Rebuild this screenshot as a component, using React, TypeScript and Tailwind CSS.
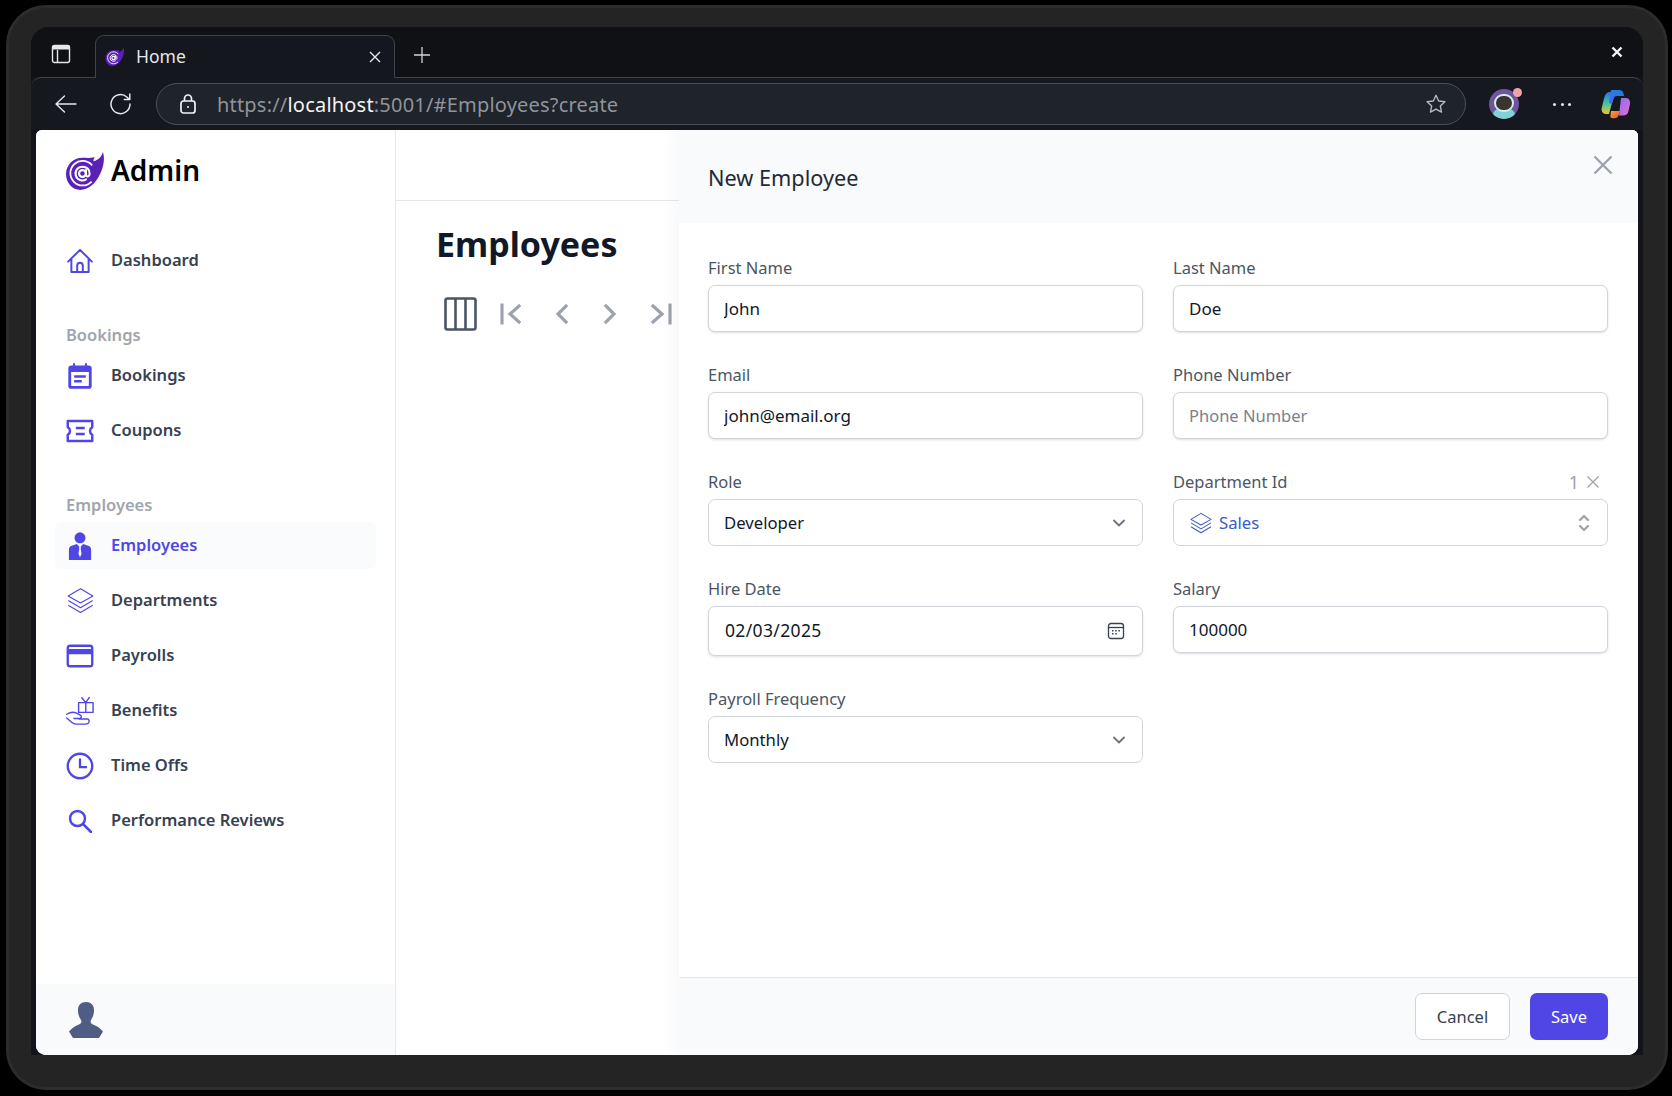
import React from "react";

const I = "#4f46e5";

function Svg({ children, size = 28, className = "", view = "0 0 24 24" }: { children: React.ReactNode; size?: number; className?: string; view?: string }) {
  return (
    <svg width={size} height={size} viewBox={view} fill="none" stroke="currentColor" strokeLinecap="round" strokeLinejoin="round" className={className}>
      {children}
    </svg>
  );
}

const HomeIcon = () => (
  <Svg>
    <path strokeWidth="1.700" d="M1.800 12.500 12 2.500l10.200 10M4.600 10.200V21.500h14.800V10.200M9.600 21.500v-5.700a2.400 2.400 0 0 1 4.800 0v5.700" />
  </Svg>
);
const CalendarIcon = () => (
  <Svg>
    <path fill={I} stroke="none" d="M6 1h1.800v2h8.400V1H18v2h1.500A2.500 2.500 0 0 1 22 5.500v15a2.500 2.500 0 0 1-2.500 2.500h-15A2.500 2.500 0 0 1 2 20.500v-15A2.500 2.500 0 0 1 4.500 3H6zM4.400 8.500V20a.6.600 0 0 0 .6.600h14a.6.600 0 0 0 .6-.6V8.500z" />
    <path strokeWidth="2.200" stroke={I} strokeLinecap="butt" d="M7 12.500h10M7 16.500h6.500" />
  </Svg>
);
const TicketIcon = () => (
  <Svg>
    <path strokeWidth="2.100" d="M1.500 3.500h21v5.200c-2.600 1.600-2.600 5 0 6.600v5.200h-21v-5.200c2.600-1.600 2.600-5 0-6.600z" />
    <path strokeWidth="2.100" strokeLinecap="square" d="M9.500 9.500h5.500M9.500 14.500h5.500" />
  </Svg>
);
const PersonIcon = () => (
  <Svg>
    <circle cx="12" cy="5" r="4.700" fill={I} stroke="none" />
    <path fill={I} stroke="none" d="M2.500 24v-9c0-1.800 1-2.800 2.500-3.300l4.300-1.500 2.700 3 2.700-3 4.300 1.500c1.500.5 2.500 1.500 2.500 3.300v9z" />
    <path fill="#fafbfc" stroke="none" d="M11.200 12.800h1.600l-.2 1.500.7 4.500-1.300 2.900-1.300-2.900.7-4.500z" />
  </Svg>
);
const LayersIcon = ({ size = 27, w = 1 }: { size?: number; w?: number }) => (
  <Svg size={size}>
    <path strokeWidth={w} d="M12 1.500 23 8l-11 6.200L1 8zM1.500 12.200 12 18.400l10.500-6.200M1.500 16.400 12 22.600l10.500-6.200" />
  </Svg>
);
const CardIcon = () => (
  <Svg>
    <rect x="1.500" y="3.200" width="21" height="17.600" rx="2" strokeWidth="2" />
    <path fill={I} stroke="none" d="M1.500 6h21v4.500h-21z" />
  </Svg>
);
const GiftIcon = () => (
  <Svg size={30} view="0 0 30 30">
    <path strokeWidth="1.500" d="M13.500 6h15.500v10.500H13.500zM21.200 6v10.500M17 .8l4.200 5.200 3.800-5.500" />
    <path strokeWidth="1.500" d="M.8 18.500c3-1.800 7-2.600 10-1.500l4.500 2.500c2 1 1 3.500-1 3.500H8.500M.8 22.500c2.500 2 4.800 5 7.500 6 2 .8 13 .8 15 0 2-.8 2-5-.5-5H14" />
  </Svg>
);
const ClockIcon = () => (
  <Svg>
    <circle cx="12" cy="12" r="10.500" strokeWidth="2" />
    <path strokeWidth="2" strokeLinecap="square" d="M12 6.500V13h5" />
  </Svg>
);
const SearchIcon = () => (
  <Svg size={24}>
    <circle cx="9.500" cy="9.500" r="7.500" strokeWidth="2.500" />
    <path strokeWidth="2.500" d="m15 15 8 8" />
  </Svg>
);

function Logo({ size = 41 }: { size?: number }) {
  return (
    <svg width={size} height={size} viewBox="0 0 40 38" className="shrink-0">
      <path fill="#5b21b6" d="M17 5.500c3 0 6 .500 8 0l4-.500c-1 1.500-1.500 3-1 4 4-1 7.500-4 9-9 2 6 1 14-3 22-4 9-12 15-19 15C7 37 1 30 1 21.500 1 12.500 8 5.500 17 5.500z" />
      <path fill="none" stroke="#fff" strokeWidth="1.700" d="M26 28.800A12 12 0 1 1 26.500 13" />
      <circle cx="17" cy="21" r="3.300" fill="none" stroke="#fff" strokeWidth="2.200" />
      <path fill="none" stroke="#fff" strokeWidth="2" strokeLinecap="round" d="M20.500 17.500V22c0 2.500 3.300 2.500 3.500-.8.3-4.200-3-6.900-7-6.900a6.700 6.700 0 1 0 3.500 12.400" />
    </svg>
  );
}

function NavItem({ icon, label, active }: { icon: React.ReactNode; label: string; active?: boolean }) {
  return (
    <div className={`mx-[19px] flex h-[47px] items-center rounded-md pl-[11px] ${active ? "bg-[#fafbfc]" : ""}`}>
      <span className="flex w-[28px] shrink-0 items-center justify-center text-[#4f46e5]">{icon}</span>
      <span className={`ml-[17px] text-[16.500px] font-semibold ${active ? "text-[#4f46e5]" : "text-[#374151]"}`}>{label}</span>
    </div>
  );
}

function Field({ label, children, extra }: { label: string; children: React.ReactNode; extra?: React.ReactNode }) {
  return (
    <div>
      <div className="mb-[5px] flex h-[24px] items-center justify-between text-[16.500px] text-[#4b5563]">
        <span>{label}</span>
        {extra}
      </div>
      {children}
    </div>
  );
}

function TextInput({ value, placeholder }: { value?: string; placeholder?: string }) {
  return (
    <input
      readOnly
      value={value ?? ""}
      placeholder={placeholder}
      className="block h-[47px] w-full rounded-[7px] border border-[#d1d5db] bg-white px-[15px] text-[17px] text-[#111827] shadow-sm outline-none placeholder:text-[16.500px] placeholder:text-[#7b8089]"
    />
  );
}

function SelectBox({ value }: { value: string }) {
  return (
    <div className="flex h-[47px] items-center justify-between rounded-[7px] border border-[#d1d5db] bg-white pl-[15px] pr-[13px] text-[16.700px] text-[#111827]">
      <span>{value}</span>
      <svg width="20" height="20" viewBox="0 0 20 20" fill="none" stroke="#6b7280" strokeWidth="1.800" strokeLinecap="round" strokeLinejoin="round">
        <path d="m5 7.500 5 5 5-5" />
      </svg>
    </div>
  );
}

function Copilot() {
  return (
    <svg width="30" height="30" viewBox="0 0 30 30">
      <defs>
        <linearGradient id="cpA" x1="0" y1="0" x2="0" y2="1">
          <stop offset="0" stopColor="#2f6fe0" />
          <stop offset="0.500" stopColor="#3cc3a0" />
          <stop offset="1" stopColor="#f2c230" />
        </linearGradient>
        <linearGradient id="cpB" x1="0" y1="0" x2="0" y2="1">
          <stop offset="0" stopColor="#1d7fe0" />
          <stop offset="1" stopColor="#5a5fe8" />
        </linearGradient>
        <linearGradient id="cpC" x1="0" y1="0" x2="1" y2="1">
          <stop offset="0" stopColor="#8d6cf0" />
          <stop offset="1" stopColor="#e76fd0" />
        </linearGradient>
        <linearGradient id="cpD" x1="0" y1="0" x2="1" y2="1">
          <stop offset="0" stopColor="#f5a23a" />
          <stop offset="1" stopColor="#e9503f" />
        </linearGradient>
      </defs>
      <path fill="url(#cpC)" d="M20 9h5c3 0 4.500 3 4 6l-1.500 7c-.500 3-3 4.500-5.500 4.500h-4z" />
      <path fill="url(#cpD)" d="M10 22h9l-1.500 4.500c-.500 1.800-2 2.800-3.500 2.800h-2.500c-2 0-2.500-1.500-2-3z" />
      <path fill="url(#cpA)" d="M9 3h5L8 25H5C1.500 25 0 22 .800 18.500l2.200-9C4 5 6 3 9 3z" />
      <path fill="url(#cpB)" d="M10 1h8c2.500 0 4 1.500 4.500 3.500L23 7h-7c-2 0-3 1-3.500 3L11 15l-3-1 1-7z" />
    </svg>
  );
}

function Avatar() {
  return (
    <div className="relative flex h-[30px] w-[30px] items-center justify-center overflow-visible">
      <div className="relative h-[30px] w-[30px] overflow-hidden rounded-full bg-[#6f559b]">
        <div className="absolute bottom-0 left-[4px] h-[10px] w-[22px] rounded-t-md bg-[#7fd3d8]" />
        <div className="absolute left-[5px] top-[5px] h-[18px] w-[20px] rounded-full border-[2.500px] border-[#d2edf2] bg-[#3b332d]" />
      </div>
      <div className="absolute right-[-3px] top-[-1px] h-[9px] w-[9px] rounded-full bg-[#f0a3a8]" />
    </div>
  );
}

function Chevron({ d, className = "" }: { d: string; className?: string }) {
  return (
    <svg width="26" height="26" viewBox="0 0 26 26" fill="none" stroke="#9ca3af" strokeWidth="3.200" strokeLinecap="square" strokeLinejoin="miter" className={className}>
      <path d={d} />
    </svg>
  );
}

export default function App() {
  return (
    <div className="h-[1096px] w-[1672px] overflow-hidden bg-black pb-[6px] pl-[6px] pr-[4px] pt-[5px] text-[#111827] [font-family:'Noto_Sans',sans-serif]">
      <div className="flex h-full flex-col rounded-[40px] border-[3px] border-[#2c2c2c] bg-[#242424] pb-[32px] pl-[22px] pr-[22px] pt-[19px]">
        <div className="flex min-h-0 flex-1 flex-col overflow-hidden rounded-t-[18px] bg-[#121419]">
          {/* tab strip */}
          <div className="flex h-[50px] shrink-0 items-end bg-[#0f1115]">
            <div className="flex h-[50px] w-[64px] items-center justify-center pr-[5px] pt-[4px]">
              <svg width="20" height="20" viewBox="0 0 20 20" fill="none" stroke="#e5e7eb" strokeWidth="1.400">
                <rect x="1.500" y="1.500" width="17" height="17" rx="2" />
                <path fill="#e5e7eb" stroke="none" d="M1.500 1.500h17v4h-17z" />
                <path d="M6.500 6v12" />
              </svg>
            </div>
            <div className="relative z-10 mb-[-1px] flex h-[43px] w-[300px] items-center rounded-t-[9px] border border-b-0 border-[#3f434b] bg-[#14171d] pl-[9px] pr-[11px]">
              <Logo size={20} />
              <span className="mb-[1px] ml-[11px] flex-1 text-[17.500px] text-[#e5e7eb]">Home</span>
              <svg width="16" height="16" viewBox="0 0 16 16" stroke="#e5e7eb" strokeWidth="1.400">
                <path d="m3 3 10 10M13 3 3 13" />
              </svg>
            </div>
            <div className="flex h-[50px] w-[54px] items-center justify-center pt-[5px]">
              <svg width="20" height="20" viewBox="0 0 20 20" stroke="#d1d5db" strokeWidth="1.300">
                <path d="M10 2v16M2 10h16" />
              </svg>
            </div>
            <div className="flex-1" />
            <div className="flex h-[50px] w-[56px] items-center justify-center pl-[3px]">
              <svg width="16" height="16" viewBox="0 0 16 16" stroke="#f3f4f6" strokeWidth="2.400">
                <path d="m3.500 3.500 9 9M12.500 3.500l-9 9" />
              </svg>
            </div>
          </div>
          {/* toolbar */}
          <div className="flex h-[53px] shrink-0 items-center rounded-t-[10px] border-t border-[#3f434b] bg-[#15181e] pl-[23px] pr-[12px]">
            <svg width="24" height="24" viewBox="0 0 24 24" fill="none" stroke="#e5e7eb" strokeWidth="1.400" strokeLinecap="round" strokeLinejoin="round">
              <path d="M22 12H2M10.500 4 2 12l8.500 8" />
            </svg>
            <svg width="24" height="24" viewBox="0 0 24 24" fill="none" stroke="#e5e7eb" strokeWidth="1.500" strokeLinecap="round" strokeLinejoin="round" className="ml-[31px]">
              <path d="M21 12a9.500 9.500 0 1 1-3.200-7l2.700 2.500M20.800 2v5.500h-5.500" />
            </svg>
            <div className="ml-[23px] flex h-[42px] w-[1311px] items-center rounded-full border border-[#4b5058] bg-[#1f232a] pl-[21px] pr-[18px]">
              <svg width="20" height="22" viewBox="0 0 20 22" fill="none" stroke="#f3f4f6" strokeWidth="1.700">
                <rect x="3" y="8" width="14" height="12" rx="2.500" />
                <path d="M6.500 8V5.500a3.500 3.500 0 0 1 7 0V8" />
                <circle cx="10" cy="14" r="1" fill="#f3f4f6" stroke="none" />
              </svg>
              <span className="ml-[19px] flex-1 pt-[1px] text-[20px] tracking-[0.2px] text-[#8f949c]">
                https://<span className="text-[#f3f4f6]">localhost</span>:5001/#Employees?create
              </span>
              <svg width="22" height="22" viewBox="0 0 24 24" fill="none" stroke="#b6bac1" strokeWidth="1.500" strokeLinejoin="round">
                <path d="m12 2.500 2.900 6.200 6.800.8-5 4.600 1.300 6.700-6-3.300-6 3.300 1.300-6.700-5-4.600 6.800-.8z" />
              </svg>
            </div>
            <div className="ml-[23px]"><Avatar /></div>
            <div className="ml-[34px] flex w-[18px] items-center justify-between">
              <span className="h-[3px] w-[3px] rounded-full bg-[#e5e7eb]" />
              <span className="h-[3px] w-[3px] rounded-full bg-[#e5e7eb]" />
              <span className="h-[3px] w-[3px] rounded-full bg-[#e5e7eb]" />
            </div>
            <div className="ml-[30px]"><Copilot /></div>
          </div>
          {/* page */}
          <div className="relative mx-[5px] flex min-h-0 flex-1 overflow-hidden rounded-b-[10px] rounded-t-[6px] bg-white">
            <aside className="flex w-[360px] shrink-0 flex-col border-r border-[#e5e7eb] bg-white">
              <div className="flex h-[66px] items-start pl-[29px] pt-[21px]">
                <Logo />
                <span className="ml-[5px] mt-[-3px] text-[28px] font-semibold leading-[44px] text-black">Admin</span>
              </div>
              <div className="mt-[41px]">
                <NavItem icon={<HomeIcon />} label="Dashboard" />
              </div>
              <div className="ml-[30px] mt-[39px] h-[24px] text-[16.500px] font-semibold leading-[24px] text-[#a1a5ab]">Bookings</div>
              <div className="mt-[5px] flex flex-col gap-[8px]">
                <NavItem icon={<CalendarIcon />} label="Bookings" />
                <NavItem icon={<TicketIcon />} label="Coupons" />
              </div>
              <div className="ml-[30px] mt-[39px] h-[24px] text-[16.500px] font-semibold leading-[24px] text-[#a1a5ab]">Employees</div>
              <div className="mt-[5px] flex flex-col gap-[8px]">
                <NavItem active icon={<PersonIcon />} label="Employees" />
                <NavItem icon={<LayersIcon />} label="Departments" />
                <NavItem icon={<CardIcon />} label="Payrolls" />
                <NavItem icon={<GiftIcon />} label="Benefits" />
                <NavItem icon={<ClockIcon />} label="Time Offs" />
                <NavItem icon={<SearchIcon />} label="Performance Reviews" />
              </div>
              <div className="mt-auto flex h-[71px] items-center bg-[#f9fafb] pl-[33px]">
                <svg width="34" height="36" viewBox="0 0 34 36" fill="#4f5d85">
                  <path d="M17 0c5 0 8 3 8 8 0 4-1 7-3 10-1 2 0 3.500 2 4.500 4 1.500 7 3.500 10 7l-4 6.500H4L0 29.500c3-3.500 6-5.500 10-7 2-1 3-2.500 2-4.500-2-3-3-6-3-10 0-5 3-8 8-8z" />
                </svg>
              </div>
            </aside>
            <main className="min-w-0 flex-1">
              <div className="h-[71px] border-b border-[#e5e7eb]" />
              <h1 className="ml-[40px] mt-[19px] text-[34px] font-bold leading-[48px] text-[#111827]">Employees</h1>
              <div className="ml-[48px] mt-[29px] flex items-center">
                <svg width="33" height="34" viewBox="0 0 33 34" fill="none" stroke="#4b5563" strokeWidth="2.600" strokeLinejoin="round">
                  <rect x="1.500" y="1.500" width="30" height="31" rx="2" />
                  <path d="M11.500 1.500v31M21.500 1.500v31" />
                </svg>
                <Chevron className="ml-[21px]" d="M4 4v18M21 5l-9 8 9 8" />
                <Chevron className="ml-[24px]" d="M18 5l-8 8 8 8" />
                <Chevron className="ml-[24px]" d="M8 5l8 8-8 8" />
                <Chevron className="ml-[24px]" d="M5 5l9 8-9 8M22 4v18" />
              </div>
            </main>
            {/* drawer */}
            <section className="absolute bottom-0 right-0 top-0 flex w-[959px] flex-col bg-white shadow-[-6px_0_14px_rgba(0,0,0,0.03)]">
              <div className="relative flex h-[93px] shrink-0 items-center bg-[#f9fafb] pl-[29px]">
                <h2 className="mt-[2px] text-[21.700px] leading-[32px] text-[#1f2937]">New Employee</h2>
                <svg width="24" height="24" viewBox="0 0 24 24" stroke="#9ca3af" strokeWidth="2.400" className="absolute right-[23px] top-[23px]">
                  <path d="m3.500 3.500 17 17M20.500 3.500l-17 17" />
                </svg>
              </div>
              <div className="grid flex-1 grid-cols-2 content-start gap-x-[30px] gap-y-[31px] pl-[29px] pr-[30px] pt-[33px]">
                <Field label="First Name"><TextInput value="John" /></Field>
                <Field label="Last Name"><TextInput value="Doe" /></Field>
                <Field label="Email"><TextInput value="john@email.org" /></Field>
                <Field label="Phone Number"><TextInput placeholder="Phone Number" /></Field>
                <Field label="Role"><SelectBox value="Developer" /></Field>
                <Field
                  label="Department Id"
                  extra={
                    <span className="mr-[7px] flex items-center text-[#9ca3af]">
                      <span className="text-[18px]">1</span>
                      <svg width="16" height="16" viewBox="0 0 16 16" stroke="#9ca3af" strokeWidth="1.300" className="ml-[6px]">
                        <path d="m2.500 2.500 11 11M13.500 2.500l-11 11" />
                      </svg>
                    </span>
                  }
                >
                  <div className="flex h-[47px] items-center rounded-[7px] border border-[#d1d5db] bg-white pl-[16px] pr-[15px] text-[16.700px] text-[#3b5bc7]">
                    <LayersIcon size={22} w={1.100} />
                    <span className="ml-[7px] flex-1">Sales</span>
                    <svg width="16" height="24" viewBox="0 0 16 24" fill="none" stroke="#9ca3af" strokeWidth="2.200" strokeLinecap="round" strokeLinejoin="round">
                      <path d="m4 9 4-4 4 4M4 15l4 4 4-4" />
                    </svg>
                  </div>
                </Field>
                <Field label="Hire Date">
                  <div className="flex h-[50px] items-center justify-between rounded-[7px] border border-[#d1d5db] bg-white pb-[1px] pl-[16px] pr-[17px] text-[17.500px] tracking-[0.35px] text-[#111827] shadow-sm">
                    <span>02/03/2025</span>
                    <svg width="18" height="18" viewBox="0 0 18 18" fill="none" stroke="#374151" strokeWidth="1.300">
                      <rect x="1.500" y="1.500" width="15" height="15" rx="2.500" />
                      <path d="M1.500 5.500h15" />
                      <path fill="#374151" stroke="none" d="M5 8h1.500v1.500H5zM8.200 8h1.500v1.500H8.200zM11.400 8h1.500v1.500h-1.500zM5 11h1.500v1.500H5zM8.200 11h1.500v1.500H8.200z" />
                    </svg>
                  </div>
                </Field>
                <Field label="Salary"><TextInput value="100000" /></Field>
                <Field label="Payroll Frequency"><SelectBox value="Monthly" /></Field>
              </div>
              <div className="flex h-[78px] shrink-0 items-center justify-end gap-[20px] border-t border-[#e5e7eb] bg-[#f9fafb] pr-[30px]">
                <button className="h-[47px] w-[95px] rounded-[7px] border border-[#d1d5db] bg-white pt-[1px] text-[16.500px] text-[#374151]">Cancel</button>
                <button className="h-[47px] w-[78px] rounded-[7px] bg-[#4f46e5] pt-[1px] text-[16.500px] text-white">Save</button>
              </div>
            </section>
          </div>
        </div>
      </div>
    </div>
  );
}
